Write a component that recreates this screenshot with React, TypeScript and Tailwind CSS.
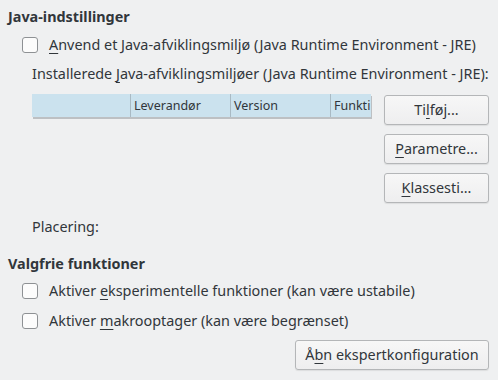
import React from "react";

const U = ({ children }: { children: React.ReactNode }) => (
  <span className="underline decoration-1 underline-offset-[3px]">{children}</span>
);

const Check = ({ children }: { children: React.ReactNode }) => (
  <div className="flex items-center h-[16px] ml-[14px]">
    <div className="w-[16px] h-[16px] rounded-[3px] border border-[#8e9194] bg-[#fcfcfc] shrink-0" />
    <div className="ml-[11px] leading-[18px] whitespace-nowrap">{children}</div>
  </div>
);

const Btn = ({ children, className = "" }: { children: React.ReactNode; className?: string }) => (
  <div
    className={
      "h-[30px] rounded-[3px] border border-[#b4b6b8] bg-gradient-to-b from-[#f7f7f7] to-[#eeeeef] shadow-[0_1px_1px_rgba(0,0,0,0.08)] flex items-center justify-center leading-[18px] whitespace-nowrap " +
      className
    }
  >
    {children}
  </div>
);

export default function App() {
  return (
    <div
      className="w-[498px] h-[380px] bg-[#eff0f1] text-[#31363b] text-[14.4px] overflow-hidden pl-[8px] pr-[9px] pt-[8px]"
      style={{ fontFamily: '"Noto Sans", "Open Sans", sans-serif' }}
    >
      <div className="font-bold leading-[18px]">Java-indstillinger</div>
      <div className="mt-[11px]">
        <Check>
          <U>A</U>nvend et Java-afviklingsmiljø (Java Runtime Environment - JRE)
        </Check>
      </div>
      <div className="mt-[12px] ml-[24px] leading-[18px] whitespace-nowrap">
        Installerede <U>J</U>ava-afviklingsmiljøer (Java Runtime Environment - JRE):
      </div>
      <div className="flex items-start mt-[11px] ml-[24px]">
        <div className="w-[339px] h-[23px] bg-[#cbe2ee] shadow-[1px_2px_0_#bdc0c3] flex overflow-hidden text-[12.5px]">
          <div className="w-[99px] shrink-0 border-r border-[#a9bac4]" />
          <div className="w-[100px] shrink-0 border-r border-[#a9bac4] pl-[3px] leading-[23px]">Leverandør</div>
          <div className="w-[100px] shrink-0 border-r border-[#a9bac4] pl-[3px] leading-[23px]">Version</div>
          <div className="pl-[3px] leading-[23px] whitespace-nowrap">Funkti</div>
        </div>
        <div className="ml-auto w-[105px] mt-[1px] flex flex-col gap-[9px]">
          <Btn>
            Ti<U>l</U>føj...
          </Btn>
          <Btn>
            <U>P</U>arametre...
          </Btn>
          <Btn>
            <U>K</U>lassesti...
          </Btn>
        </div>
      </div>
      <div className="mt-[15px] ml-[24px] leading-[18px]">Placering:</div>
      <div className="mt-[19px] font-bold leading-[18px]">Valgfrie funktioner</div>
      <div className="mt-[10px]">
        <Check>
          Aktiver <U>e</U>ksperimentelle funktioner (kan være ustabile)
        </Check>
      </div>
      <div className="mt-[14px]">
        <Check>
          Aktiver <U>m</U>akrooptager (kan være begrænset)
        </Check>
      </div>
      <div className="flex justify-end mt-[11px]">
        <Btn className="w-[194px]">
          Å<U>b</U>n ekspertkonfiguration
        </Btn>
      </div>
    </div>
  );
}
